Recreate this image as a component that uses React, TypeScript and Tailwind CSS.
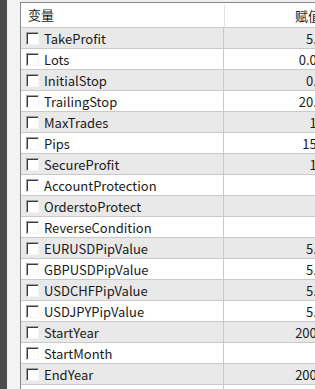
const rows: { name: string; value: string }[] = [
  { name: 'TakeProfit', value: '5.0' },
  { name: 'Lots', value: '0.01' },
  { name: 'InitialStop', value: '0.0' },
  { name: 'TrailingStop', value: '20.0' },
  { name: 'MaxTrades', value: '10' },
  { name: 'Pips', value: '150' },
  { name: 'SecureProfit', value: '10' },
  { name: 'AccountProtection', value: '' },
  { name: 'OrderstoProtect', value: '' },
  { name: 'ReverseCondition', value: '' },
  { name: 'EURUSDPipValue', value: '5.0' },
  { name: 'GBPUSDPipValue', value: '5.0' },
  { name: 'USDCHFPipValue', value: '5.0' },
  { name: 'USDJPYPipValue', value: '5.0' },
  { name: 'StartYear', value: '2005' },
  { name: 'StartMonth', value: '' },
  { name: 'EndYear', value: '2005' },
  { name: 'EndMonth', value: '' },
];

const Checkbox = () => (
  <span className="block w-[13px] h-[13px] shrink-0 bg-white border border-[#a0a0a0] border-b-[#f4f4f4] border-r-[#f4f4f4] shadow-[inset_1px_1px_0_#3a3a3a]" />
);

export default function App() {
  return (
    <div
      className="flex w-[315px] h-[389px] overflow-hidden bg-[#f0f0f0] text-[13px] text-[#1a1a1a]"
      style={{ fontFamily: '"Noto Sans CJK SC", "Noto Sans", sans-serif' }}
    >
      <div className="w-[7px] shrink-0 bg-[#4b4b4b]" />
      <div className="w-[13px] shrink-0 bg-[#f3f3f3]" />
      <div className="flex-1 mt-[2px] border-l border-t border-[#828790] bg-white overflow-hidden">
        <div className="w-[308px]">
          <div className="flex h-[25px] border-b border-[#c9c9c9] bg-white">
            <div className="w-[203px] shrink-0 flex items-center pl-[7px]">变量</div>
            <div className="w-[105px] shrink-0 flex items-center justify-end pr-[8px] mt-[2px] border-l border-[#e3e3e3]">赋值</div>
          </div>
          {rows.map((row, i) => (
            <div
              key={row.name}
              className={`flex h-[21px] border-b border-[#c9c9c9] ${i % 2 === 0 ? 'bg-[#e9e9e9]' : 'bg-white'}`}
            >
              <div className="w-[202px] shrink-0 flex items-center gap-[5px] pl-[5px]">
                <Checkbox />
                <span className="leading-none">{row.name}</span>
              </div>
              <div className="w-[106px] shrink-0 flex items-center justify-end pr-[5px] border-l border-[#c9c9c9]">
                <span className="leading-none">{row.value}</span>
              </div>
            </div>
          ))}
        </div>
      </div>
    </div>
  );
}
